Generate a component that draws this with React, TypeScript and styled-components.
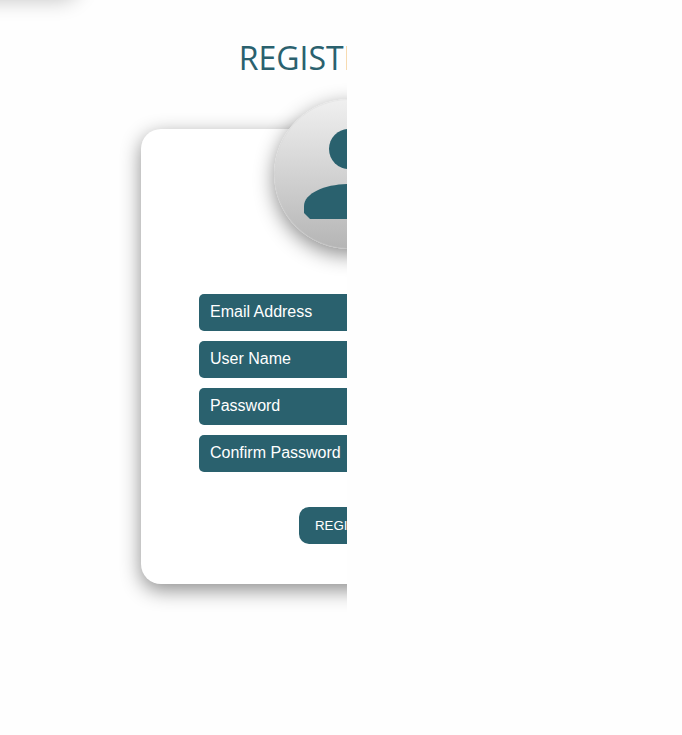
import React from "react";
import styled, { createGlobalStyle } from "styled-components";

const teal = "#2a616e";
const shadow = "0 6px 20px rgba(0, 0, 0, 0.45)";

const GlobalStyle = createGlobalStyle`
  *, *::before, *::after { box-sizing: border-box; }
  body { margin: 0; background: #fefefe; font-family: "Liberation Sans", Arial, sans-serif; }
`;

const Viewport = styled.div`
  width: 347px;
  height: 735px;
  overflow: hidden;
`;

const NavEdge = styled.div`
  width: 120px;
  height: 40px;
  margin: -44px 0 0 -40px;
  border-radius: 0 0 20px 0;
  box-shadow: 0 5px 20px rgba(0, 0, 0, 0.22);
`;

const Page = styled.main`
  display: flex;
  flex-direction: column;
  align-items: center;
  width: 416px;
  margin-left: 141px;
  padding-top: 40px;
`;

const Title = styled.h1`
  margin: 0;
  height: 93px;
  color: ${teal};
  font: 400 32px/44px "Open Sans", sans-serif;
`;

const Card = styled.section`
  display: flex;
  flex-direction: column;
  align-items: center;
  width: 416px;
  height: 455px;
  border-radius: 20px;
  background: #fff;
  box-shadow: ${shadow};
`;

const Avatar = styled.div`
  flex: none;
  display: flex;
  width: 150px;
  height: 150px;
  margin-top: -30px;
  border-radius: 50%;
  background: linear-gradient(#f0f0f0, #b5b5b5);
  box-shadow: inset 0 0 0 1px rgba(215, 215, 215, 0.35), ${shadow};
`;

const Form = styled.form`
  display: flex;
  flex-direction: column;
  gap: 10px;
  width: 300px;
  margin-top: 45px;
`;

const Field = styled.input`
  width: 100%;
  height: 37px;
  padding: 0 11px 2px;
  border: 0;
  border-radius: 5px;
  background: ${teal};
  color: #fff;
  font: 16px "Liberation Sans", Arial, sans-serif;
  &::placeholder { color: #fff; opacity: 1; }
`;

const Submit = styled.button`
  align-self: center;
  width: 100px;
  height: 37px;
  margin-top: 25px;
  padding: 0;
  border: 0;
  border-radius: 10px;
  background: ${teal};
  color: #fff;
  font: 13.333px "Liberation Sans", Arial, sans-serif;
`;

const fields = [
  { label: "Email Address", type: "email" },
  { label: "User Name", type: "text" },
  { label: "Password", type: "password" },
  { label: "Confirm Password", type: "password" },
];

export default function App() {
  return (
    <>
      <GlobalStyle />
      <Viewport>
        <NavEdge />
        <Page>
          <Title>REGISTRATION</Title>
          <Card>
            <Avatar>
              <svg width="150" height="150" viewBox="0 0 150 150" fill={teal}>
                <circle cx="75" cy="50" r="20" />
                <path d="M30 107v7l6 6h78l6-6v-7c0-13-22-22-45-22s-45 9-45 22z" />
              </svg>
            </Avatar>
            <Form>
              {fields.map((f) => (
                <Field key={f.label} type={f.type} placeholder={f.label} />
              ))}
              <Submit type="button">REGISTER</Submit>
            </Form>
          </Card>
        </Page>
      </Viewport>
    </>
  );
}
